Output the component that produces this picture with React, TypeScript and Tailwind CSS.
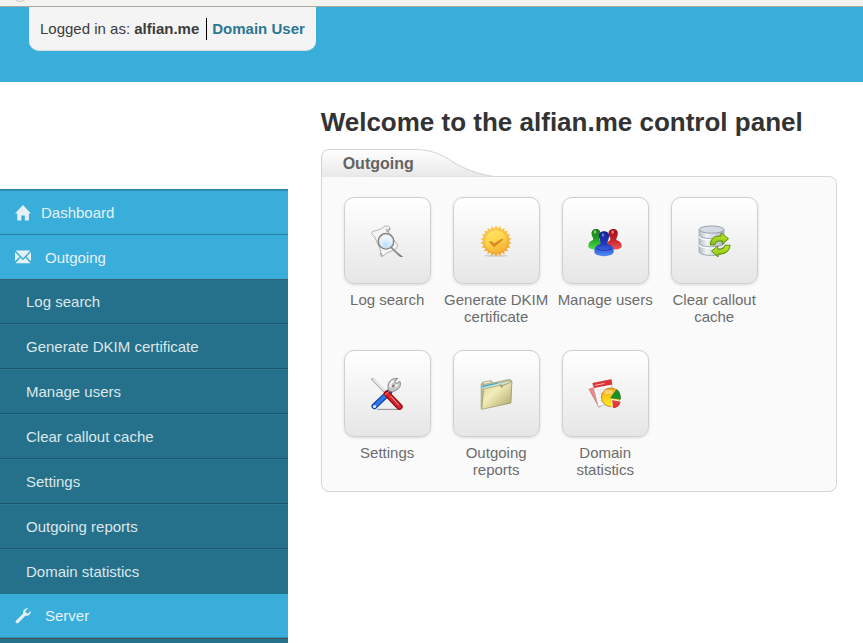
import type { ReactNode } from 'react';

function LogSearchIcon() {
  return (
    <svg viewBox="0 0 96 96" className="size-8" aria-hidden="true">
      <defs>
        <radialGradient id="lens" cx="0.5" cy="0.75" r="0.7">
          <stop offset="0" stopColor="#b9e0fb" />
          <stop offset="0.6" stopColor="#e6f4fe" />
          <stop offset="1" stopColor="#fff" />
        </radialGradient>
      </defs>
      <path d="M2 26Q3 16 14 17Q30 15 42 3Q53 0 57 9Q54 16 45 13L80 60Q79 73 68 76Q50 80 34 94Q24 96 29 84Q30 76 24 65L10 34Z" fill="#f4f4f4" stroke="#b4b4b4" strokeWidth="3" />
      <path d="M29 84Q34 90 34 94M57 9Q56 22 46 18" fill="none" stroke="#8b8b8b" strokeWidth="3" />
      <path d="M61 67L82 88L94 97" fill="none" stroke="#858585" strokeWidth="6" strokeLinecap="round" />
      <path d="M62 66L80 84" stroke="#c6c6c6" strokeWidth="2" />
      <circle cx="45" cy="49" r="23" fill="url(#lens)" stroke="#858585" strokeWidth="5" />
      <circle cx="45" cy="49" r="20" fill="none" stroke="#d5d9dd" strokeWidth="3" />
    </svg>
  );
}

function CertificateIcon() {
  const points = Array.from({ length: 44 }, (_, i) => {
    const radius = i % 2 === 0 ? 48 : 39;
    const angle = (i * Math.PI) / 22;
    return `${(48 + radius * Math.sin(angle)).toFixed(1)},${(49 - radius * Math.cos(angle)).toFixed(1)}`;
  }).join(' ');
  return (
    <svg viewBox="0 0 96 98" className="size-8" aria-hidden="true">
      <defs>
        <linearGradient id="seal" x1="0" y1="0" x2="0.3" y2="1">
          <stop offset="0" stopColor="#ffd25a" />
          <stop offset="1" stopColor="#f2a52c" />
        </linearGradient>
        <linearGradient id="sealFace" x1="0" y1="0" x2="0.5" y2="1">
          <stop offset="0" stopColor="#ffe36e" />
          <stop offset="0.5" stopColor="#ffd84e" />
          <stop offset="1" stopColor="#f5b636" />
        </linearGradient>
      </defs>
      <ellipse cx="48" cy="94" rx="36" ry="3" fill="#cfcfcf" />
      <polygon points={points} fill="url(#seal)" />
      <circle cx="48" cy="49" r="35" fill="url(#sealFace)" stroke="#f3b243" strokeWidth="2" />
      <path d="M26 51L42 68L71 44L65 43L42 57L33 49Z" fill="#d98722" />
    </svg>
  );
}

function UsersIcon() {
  return (
    <svg viewBox="0 0 100 96" className="h-8 w-[34px]" aria-hidden="true">
      <defs>
        <linearGradient id="userGreen" x1="0" y1="0" x2="0" y2="1">
          <stop offset="0" stopColor="#1d7a1d" />
          <stop offset="0.5" stopColor="#23a023" />
          <stop offset="1" stopColor="#4fe04a" />
        </linearGradient>
        <linearGradient id="userRed" x1="0" y1="0" x2="0" y2="1">
          <stop offset="0" stopColor="#a01216" />
          <stop offset="0.5" stopColor="#c51d24" />
          <stop offset="1" stopColor="#f0575c" />
        </linearGradient>
        <linearGradient id="userBlue" x1="0" y1="0" x2="0" y2="1">
          <stop offset="0" stopColor="#14208c" />
          <stop offset="0.5" stopColor="#2038c0" />
          <stop offset="1" stopColor="#4e8ef5" />
        </linearGradient>
      </defs>
      <path d="M23 12C34 12 38 20 36 29C35 36 32 39 33 45C42 49 45 54 45 62C44 76 1 78 0 64C0 54 4 48 14 45C16 39 12 37 10 29C8 20 13 12 23 12Z" fill="url(#userGreen)" />
      <path d="M75 12C86 12 90 20 88 29C87 37 83 39 84 45C95 48 100 54 100 64C99 78 56 76 56 62C56 54 59 49 66 45C68 39 63 37 61 29C59 20 64 12 75 12Z" fill="url(#userRed)" />
      <path d="M47 19C59 19 64 28 62 37C60 46 57 49 58 58C70 60 76 67 76 80C74 98 20 98 18 80C18 67 25 60 36 58C38 49 34 46 32 37C30 28 36 19 47 19Z" fill="url(#userBlue)" />
      <ellipse cx="20" cy="21" rx="4" ry="5" fill="#78c976" />
      <ellipse cx="73" cy="21" rx="4" ry="5" fill="#e07f7f" />
      <ellipse cx="44" cy="30" rx="4" ry="5" fill="#6678d8" />
      <path d="M24 71Q46 82 70 71" fill="none" stroke="#1c3bb8" strokeWidth="3" />
    </svg>
  );
}

function CacheIcon() {
  return (
    <svg viewBox="0 0 98 98" className="h-8 w-[33px]" aria-hidden="true">
      <defs>
        <linearGradient id="drum" x1="0" y1="0" x2="1" y2="0">
          <stop offset="0" stopColor="#b6bdc7" />
          <stop offset="0.3" stopColor="#f0f3f7" />
          <stop offset="1" stopColor="#a9b2bf" />
        </linearGradient>
        <linearGradient id="arrow" x1="0" y1="0" x2="0" y2="1">
          <stop offset="0" stopColor="#c3ea2b" />
          <stop offset="1" stopColor="#86c010" />
        </linearGradient>
      </defs>
      <path d="M2 14V82C4 97 76 97 78 82V14Z" fill="url(#drum)" stroke="#a0a8b4" strokeWidth="3" />
      <path d="M2 35C4 49 76 49 78 35M2 60C4 74 76 74 78 60" fill="none" stroke="#fff" strokeWidth="4" />
      <path d="M2 31C4 45 76 45 78 31M2 56C4 70 76 70 78 56" fill="none" stroke="#a4adb9" strokeWidth="3" />
      <ellipse cx="40" cy="14" rx="38" ry="11" fill="#d5dbe3" stroke="#98a1ae" strokeWidth="3" />
      <path d="M36 61Q37 35 62 34H69V24L92 42L73 59V49H62Q52 49 50 61Z" fill="url(#arrow)" stroke="#5c8c0c" strokeWidth="3" strokeLinejoin="round" />
      <path d="M97 62Q94 88 67 89H60V98L40 80L59 64V74H68Q80 73 82 62Z" fill="url(#arrow)" stroke="#5c8c0c" strokeWidth="3" strokeLinejoin="round" />
    </svg>
  );
}

function SettingsIcon() {
  return (
    <svg viewBox="0 0 98 100" className="size-8" aria-hidden="true">
      <path d="M18 98H84" stroke="#888" strokeWidth="3" />
      <path d="M4 4L50 51" stroke="#a5a5a5" strokeWidth="8" strokeLinecap="round" />
      <path d="M5 4L48 47" stroke="#f0f0f0" strokeWidth="4" />
      <path d="M10 88L56 44" stroke="#1246a8" strokeWidth="19" strokeLinecap="round" />
      <path d="M10 88L54 45" stroke="#2f78ea" strokeWidth="11" strokeLinecap="round" />
      <circle cx="10" cy="89" r="5" fill="#dce9ff" />
      <path d="M54 40C49 22 54 8 68 3L83 1L74 11L78 18L89 10C96 24 85 38 66 43Z" fill="#c6c6c6" stroke="#8a8a8a" strokeWidth="3" />
      <path d="M60 29Q58 15 70 9M70 28L84 21" fill="none" stroke="#f7f7f7" strokeWidth="6" />
      <circle cx="69" cy="25" r="4" fill="#777" />
      <path d="M49 49L88 90" stroke="#971116" strokeWidth="20" strokeLinecap="round" />
      <path d="M49 49L88 90" stroke="#d4242b" strokeWidth="12" strokeLinecap="round" />
      <path d="M61 57L85 84" stroke="#f7a4a5" strokeWidth="3" strokeLinecap="round" />
      <path d="M42 54L55 42" stroke="#f08385" strokeWidth="3" />
    </svg>
  );
}

function FolderIcon() {
  return (
    <svg viewBox="0 0 98 100" className="h-8 w-[33px]" aria-hidden="true">
      <defs>
        <linearGradient id="folder" x1="0" y1="0" x2="1" y2="1">
          <stop offset="0" stopColor="#d9d394" />
          <stop offset="0.4" stopColor="#f3edb9" />
          <stop offset="1" stopColor="#a9a263" />
        </linearGradient>
      </defs>
      <path d="M1 96V19L6 13L32 8L39 15L90 4L97 9L94 78Z" fill="#bdb88e" stroke="#a09c7a" strokeWidth="2" />
      <path d="M9 16L31 12" stroke="#eeecd8" strokeWidth="4" />
      <path d="M5 24L52 15V20L5 32Z" fill="#3fa6e0" />
      <path d="M5 29L90 9V15L6 36Z" fill="#c4e6d4" />
      <path d="M9 34L60 23L64 27L97 11L93 78L3 98Z" fill="url(#folder)" stroke="#9b9562" strokeWidth="2" strokeLinejoin="round" />
      <path d="M61 20L67 31" stroke="#817b55" strokeWidth="3" />
    </svg>
  );
}

function StatisticsIcon() {
  return (
    <svg viewBox="0 0 100 100" className="h-8 w-[34px]" aria-hidden="true">
      <defs>
        <linearGradient id="pie" x1="0" y1="0" x2="0" y2="1">
          <stop offset="0" stopColor="#f5a51f" />
          <stop offset="1" stopColor="#fff019" />
        </linearGradient>
      </defs>
      <path d="M0 35L20 29L38 87L31 91Z" fill="#f0898a" stroke="#d35a5a" strokeWidth="2" />
      <path d="M11 17L69 5L79 76L29 90Z" fill="#fafafa" stroke="#aaa" strokeWidth="2" />
      <path d="M11 16L70 4L73 20L16 31Z" fill="#dc3434" />
      <path d="M19 23L48 17" stroke="#fbb" strokeWidth="3" />
      <path d="M24 40L62 32M27 51L48 46M29 62L44 58M31 73L46 69M36 35L44 80" stroke="#d2d5d9" strokeWidth="2" />
      <circle cx="68" cy="60" r="29" fill="url(#pie)" stroke="#c8801a" strokeWidth="3" />
      <path d="M68 62L87 36Q99 46 98 66Z" fill="#169427" stroke="#0d6d1b" strokeWidth="2" />
      <path d="M71 67L101 73Q97 95 73 97Z" fill="#e33b32" stroke="#fff" strokeWidth="3" />
      <ellipse cx="61" cy="44" rx="14" ry="7" fill="#ffd991" opacity="0.7" />
    </svg>
  );
}

const tiles: { label: string; icon: ReactNode }[] = [
  { label: 'Log search', icon: <LogSearchIcon /> },
  { label: 'Generate DKIM certificate', icon: <CertificateIcon /> },
  { label: 'Manage users', icon: <UsersIcon /> },
  { label: 'Clear callout cache', icon: <CacheIcon /> },
  { label: 'Settings', icon: <SettingsIcon /> },
  { label: 'Outgoing reports', icon: <FolderIcon /> },
  { label: 'Domain statistics', icon: <StatisticsIcon /> },
];

function HomeGlyph() {
  return (
    <svg viewBox="0 0 16 16" className="size-4" fill="currentColor" aria-hidden="true">
      <path d="M8 0L16 8.6H13.9V15.6H9.8V10.4H6.4V15.6H2.3V8.6H0L8 0Z" />
    </svg>
  );
}

function MailGlyph() {
  return (
    <svg viewBox="0 0 16 16" className="size-4" fill="currentColor" aria-hidden="true">
      <path d="M0.600 1.400H15.400L8 9.200ZM0 3L4.600 7.700L0 12.200ZM16 3L11.400 7.700L16 12.200ZM5.500 8.800L8 11.300L10.500 8.800L15.400 14.200H0.600Z" />
    </svg>
  );
}

function WrenchGlyph() {
  return (
    <svg viewBox="0 0 16 16" className="size-4" fill="currentColor" aria-hidden="true">
      <path d="M13.2 0.3L10.5 3L11 5L13 5.4L15.7 2.8C16.3 5.8 13.6 8.4 10.4 7.7L3.2 14.9C1.7 16.3 -0.4 14.2 1 12.7L8.2 5.6C7.4 2.4 10.2 -0.4 13.2 0.3Z" />
    </svg>
  );
}

function SectionLink({ icon, label, className }: { icon: ReactNode; label: string; className: string }) {
  return (
    <a href="#" className={`flex items-center bg-[#39aeda] pl-[15px] text-[#e6f1f5] ${className}`}>
      {icon}
      {label}
    </a>
  );
}

function Sidebar() {
  return (
    <nav className="mt-[107px] w-1/3 max-w-[288px] shrink-0" aria-label="Main">
      <SectionLink icon={<HomeGlyph />} label="Dashboard" className="h-[45px] gap-[10px] border-t-2 border-[#2e8db0]" />
      <SectionLink icon={<MailGlyph />} label="Outgoing" className="h-[45px] gap-[14px] border-t border-[#2581a0]" />
      <ul>
        {tiles.map((tile, i) => (
          <li key={tile.label}>
            <a
              href="#"
              className={`flex h-[45px] items-center border-b border-t bg-[#25708a] pl-[26px] text-[#dce8ec] ${
                i === 0 ? 'border-t-[#36616f]' : 'border-t-[#2b7995]'
              } ${i === tiles.length - 1 ? 'border-b-[#25708a]' : 'border-b-[#1b566b]'}`}
            >
              {tile.label}
            </a>
          </li>
        ))}
      </ul>
      <SectionLink icon={<WrenchGlyph />} label="Server" className="h-11 gap-[14px] border-b border-[#2b8fb3]" />
      <div className="h-[5px] border-t border-[#4b5055] bg-[#25708a]" />
    </nav>
  );
}

function PanelTab() {
  return (
    <div className="relative -mb-px h-7 w-[180px]">
      <svg viewBox="0 0 180 28" className="absolute inset-0 h-7 w-[180px]" aria-hidden="true">
        <defs>
          <linearGradient id="tab" x1="0" y1="0" x2="0" y2="1">
            <stop offset="0" stopColor="#fff" />
            <stop offset="1" stopColor="#e8e8e8" />
          </linearGradient>
        </defs>
        <path d="M0.5 28V9Q0.5 0.5 9 0.5H92C110 0.5 120 5 132 13C144 20 156 25 173 27.5" fill="url(#tab)" />
        <path d="M0.5 28V9Q0.5 0.5 9 0.5H92C110 0.5 120 5 132 13C144 20 156 25 173 27.5" fill="none" stroke="#d3d3d3" />
      </svg>
      <h2 className="relative pl-[22px] pt-1 text-base leading-[22px] font-bold text-[#636363]">Outgoing</h2>
    </div>
  );
}

export default function App() {
  return (
    <div className="min-h-screen bg-white font-['Liberation_Sans',Arial,sans-serif] text-[15px] leading-[17px]">
      <div className="h-[7px] overflow-hidden border-b border-[#aaa99f] bg-[#f3f3f0] pl-3">
        <div className="-mt-[14px] size-4 rounded-full border border-[#c9c9c5]" />
      </div>
      <header className="flex h-[75px] items-start bg-[#39aeda] pl-[29px]">
        <div className="flex h-11 items-center rounded-b-[10px] border-b border-[#d7dcde] bg-[#f4f4f4] px-[11px] text-[#3c3c3c]">
          <span>
            Logged in as: <strong>alfian.me</strong>
          </span>
          <span className="mr-[5px] ml-[7px] h-[22px] w-px bg-black" />
          <a href="#" className="font-bold text-[#2b7792]">
            Domain User
          </a>
        </div>
      </header>
      <div className="flex items-start">
        <Sidebar />
        <main className="min-w-0 flex-1 pt-[25px] pr-[26px] pl-[33px]">
          <h1 className="text-[26px] leading-[30px] font-bold text-[#333]">Welcome to the alfian.me control panel</h1>
          <section className="mt-3">
            <PanelTab />
            <div className="grid grid-cols-[repeat(auto-fill,109px)] gap-y-[25px] rounded-[8px] rounded-tl-none border border-[#d6d6d6] bg-[linear-gradient(135deg,#fdfdfd_25%,#f8f8f8_25%,#f8f8f8_50%,#fdfdfd_50%,#fdfdfd_75%,#f8f8f8_75%)] bg-size-[4px_4px] pt-5 pb-[13px] pl-[11px]">
              {tiles.map((tile) => (
                <a key={tile.label} href="#" className="flex flex-col items-center text-center text-[#6c6c6c]">
                  <span className="flex size-[87px] items-center justify-center rounded-[10px] border border-[#d0d0d0] bg-linear-to-b from-white to-[#e6e6e6] shadow-[0_1px_3px_#0002]">
                    {tile.icon}
                  </span>
                  <span className="mt-[7px] px-px">{tile.label}</span>
                </a>
              ))}
            </div>
          </section>
        </main>
      </div>
    </div>
  );
}
